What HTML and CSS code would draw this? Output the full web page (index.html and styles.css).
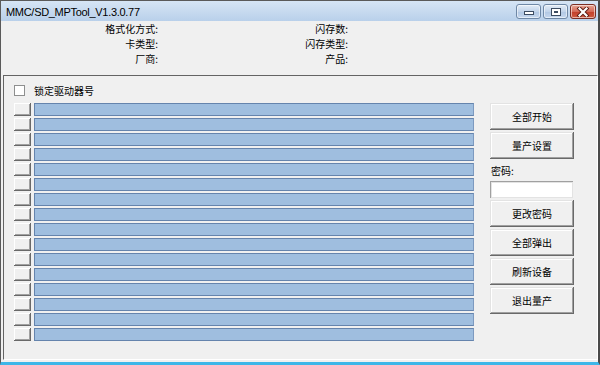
FILE: index.html
```html
<!DOCTYPE html>
<html lang="zh-CN">

<head>
    <meta charset="UTF-8">
    <title>MMC/SD_MPTool_V1.3.0.77</title>
    <link rel="stylesheet" href="styles.css">
</head>

<body>
    <div class="window">
        <div class="titlebar">
            <span class="title">MMC/SD_MPTool_V1.3.0.77</span>
            <div class="caption-buttons">
                <div class="cap cap-min"><span class="min-icon"></span></div>
                <div class="cap cap-max"><span class="max-icon"></span></div>
                <div class="cap cap-close">
                    <svg width="14" height="10" viewBox="0 0 14 10">
                        <path d="M3.5 1.5 L10.5 8.5 M10.5 1.5 L3.5 8.5" stroke="#5a1a12" stroke-width="4" stroke-linecap="square" />
                        <path d="M3.5 1.5 L10.5 8.5 M10.5 1.5 L3.5 8.5" stroke="#ffffff" stroke-width="2.2" stroke-linecap="square" />
                    </svg>
                </div>
            </div>
        </div>

        <div class="client">
            <div class="info">
                <span class="info-label">格式化方式:</span><span class="info-label">闪存数:</span>
                <span class="info-label">卡类型:</span><span class="info-label">闪存类型:</span>
                <span class="info-label">厂商:</span><span class="info-label">产品:</span>
            </div>

            <div class="panel">
                <div class="lock-row">
                    <span class="checkbox"></span>
                    <span class="lock-label">锁定驱动器号</span>
                </div>

                <div class="panel-body">
                    <div class="ports">
                        <div class="port"><span class="port-btn"></span><span class="port-bar"></span></div>
                        <div class="port"><span class="port-btn"></span><span class="port-bar"></span></div>
                        <div class="port"><span class="port-btn"></span><span class="port-bar"></span></div>
                        <div class="port"><span class="port-btn"></span><span class="port-bar"></span></div>
                        <div class="port"><span class="port-btn"></span><span class="port-bar"></span></div>
                        <div class="port"><span class="port-btn"></span><span class="port-bar"></span></div>
                        <div class="port"><span class="port-btn"></span><span class="port-bar"></span></div>
                        <div class="port"><span class="port-btn"></span><span class="port-bar"></span></div>
                        <div class="port"><span class="port-btn"></span><span class="port-bar"></span></div>
                        <div class="port"><span class="port-btn"></span><span class="port-bar"></span></div>
                        <div class="port"><span class="port-btn"></span><span class="port-bar"></span></div>
                        <div class="port"><span class="port-btn"></span><span class="port-bar"></span></div>
                        <div class="port"><span class="port-btn"></span><span class="port-bar"></span></div>
                        <div class="port"><span class="port-btn"></span><span class="port-bar"></span></div>
                        <div class="port"><span class="port-btn"></span><span class="port-bar"></span></div>
                        <div class="port"><span class="port-btn"></span><span class="port-bar"></span></div>
                    </div>

                    <div class="side">
                        <div class="btn">全部开始</div>
                        <div class="btn">量产设置</div>
                        <div class="pwd-label">密码:</div>
                        <div class="pwd-input"></div>
                        <div class="btn btn-first">更改密码</div>
                        <div class="btn">全部弹出</div>
                        <div class="btn">刷新设备</div>
                        <div class="btn">退出量产</div>
                    </div>
                </div>
            </div>
        </div>
    </div>
</body>

</html>
```

FILE: styles.css
```css
* {
    margin: 0;
    padding: 0;
    box-sizing: border-box;
}

body {
    width: 600px;
    height: 365px;
    overflow: hidden;
    font-family: "Noto Sans CJK SC", sans-serif;
    font-size: 10px;
    color: #000;
    background-color: #f0f0f0;
}

.window {
    width: 600px;
    height: 365px;
    display: flex;
    flex-direction: column;
    border-left: 1px solid #5a5a5a;
    border-right: 2px solid #4a4a4a;
    border-top: 1px solid #5a5a5a;
    border-bottom: 3px solid #3db6e8;
}

.titlebar {
    height: 20px;
    display: flex;
    align-items: center;
    justify-content: space-between;
    background: linear-gradient(#d6e5f5, #b9d0ea);
    padding-left: 5px;
    padding-right: 2px;
}

.title {
    font-family: "Liberation Sans", Arial, sans-serif;
    font-size: 11px;
    letter-spacing: -0.3px;
    color: #000;
    margin-top: 1px;
}

.caption-buttons {
    display: flex;
    gap: 2px;
    align-self: flex-start;
    margin-top: 3px;
}

.cap {
    width: 25px;
    height: 15px;
    border: 1px solid #6f88a6;
    border-radius: 3px;
    display: flex;
    align-items: center;
    justify-content: center;
    background: linear-gradient(#e3ecf7, #c2d4ea 50%, #b1c7e3 51%, #c6d8ee);
    box-shadow: inset 0 0 0 1px rgba(255, 255, 255, 0.55);
}

.cap-close {
    width: 26px;
    background: linear-gradient(#e7a696, #d46a58 50%, #c23f2b 51%, #d0593f);
    border-color: #7b2e24;
}

.min-icon {
    width: 10px;
    height: 4px;
    margin-top: 3px;
    background-color: #fff;
    border: 1px solid #3c4c62;
}

.max-icon {
    width: 10px;
    height: 8px;
    border: 1px solid #3c4c62;
    box-shadow: inset 0 0 0 2px #fff;
    background-color: #3c4c62;
}

.client {
    flex: 1;
    display: flex;
    flex-direction: column;
    background-color: #f0f0f0;
}

.info {
    height: 54px;
    display: grid;
    grid-template-columns: 157px 190px;
    grid-auto-rows: 15px;
}

.info-label {
    text-align: right;
    line-height: 15px;
}

.panel {
    flex: 1;
    margin: 0 0 2px 2px;
    border-top: 1px solid #646464;
    border-left: 1px solid #646464;
    border-right: 1px solid #ffffff;
    border-bottom: 1px solid #ffffff;
    display: flex;
    flex-direction: column;
}

.lock-row {
    display: flex;
    align-items: center;
    height: 27px;
    padding-left: 10px;
    padding-top: 1px;
}

.checkbox {
    width: 11px;
    height: 11px;
    background-color: #fff;
    border: 1px solid #8e8f8f;
    margin-right: 9px;
}

.panel-body {
    display: flex;
    padding-left: 10px;
}

.ports {
    display: flex;
    flex-direction: column;
    gap: 2px;
    width: 460px;
}

.port {
    display: flex;
    gap: 3px;
    height: 13px;
}

.port-btn {
    width: 17px;
    height: 13px;
    background-color: #f0f0f0;
    box-shadow: inset -1px -1px #696969, inset 1px 1px #ffffff, inset -2px -2px #a0a0a0;
}

.port-bar {
    flex: 1;
    height: 13px;
    background-color: #9fbedf;
    border: 1px solid #6584ad;
    border-right-color: #7d9ac0;
}

.side {
    width: 84px;
    margin-left: 16px;
    display: flex;
    flex-direction: column;
    gap: 2px;
}

.btn {
    height: 27px;
    display: flex;
    align-items: center;
    justify-content: center;
    background-color: #f0f0f0;
    box-shadow: inset -1px -1px #696969, inset 1px 1px #e3e3e3, inset -2px -2px #a0a0a0, inset 2px 2px #ffffff;
}

.pwd-label {
    height: 17px;
    line-height: 17px;
    margin-top: 1px;
    padding-left: 1px;
}

.pwd-input {
    height: 17px;
    width: 83px;
    background-color: #fff;
    box-shadow: inset 1px 1px #a0a0a0, inset -1px -1px #e3e3e3, inset 2px 2px #e3e3e3;
}
```
